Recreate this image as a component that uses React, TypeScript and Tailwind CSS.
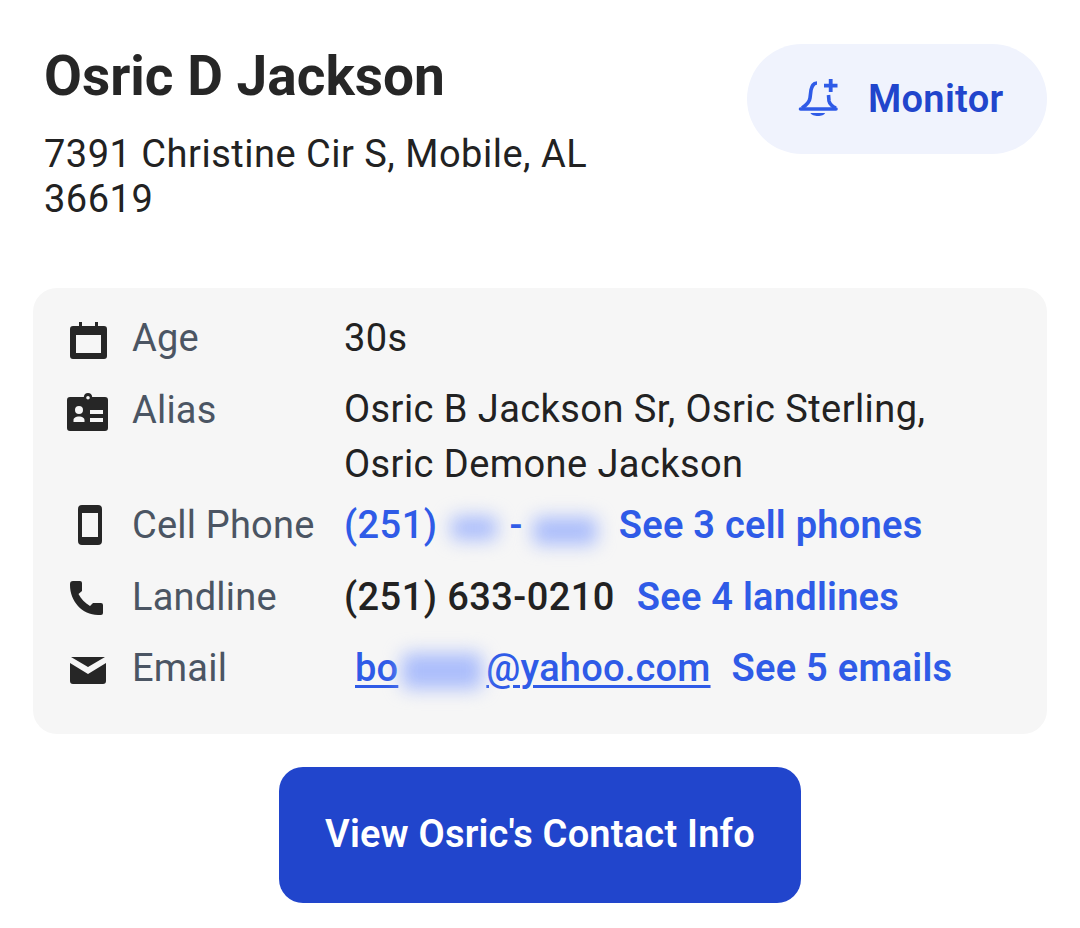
import React from "react";

const Blur = ({ className }: { className: string }) => (
  <span className={`inline-block bg-[#abbdfb] blur-[9px] rounded-md align-middle ${className}`} />
);

const See = ({ children, className }: { children: React.ReactNode; className: string }) => (
  <span className={`font-semibold tracking-[0.25px] text-[#2f5be7] ${className}`}>{children}</span>
);

const Row = ({ icon, label, children, className, labelClass = "" }: { icon: React.ReactNode; label: string; children: React.ReactNode; className: string; labelClass?: string }) => (
  <div className={`flex ${className}`}>
    <div className="w-[99px] h-[54px] pl-[34px] flex items-center text-[#262626] shrink-0">{icon}</div>
    <div className={`w-[212px] h-[54px] leading-[54px] text-[#4b5563] tracking-[0.2px] shrink-0 ${labelClass}`}>{label}</div>
    <div className="text-[#222222] leading-[55px] tracking-[0.43px] whitespace-nowrap">{children}</div>
  </div>
);

const Calendar = () => (
  <svg viewBox="0 0 37 37" className="w-[37px] h-[37px] ml-[3px] mt-[5px]" fill="currentColor">
    <path fillRule="evenodd" d="M9 0h3v4h13V0h3v4h6a3 3 0 0 1 3 3v27a3 3 0 0 1-3 3H3a3 3 0 0 1-3-3V7a3 3 0 0 1 3-3h6zM6 13v18h25V13z" />
  </svg>
);
const IdCard = () => (
  <svg viewBox="0 0 41 39" className="w-[41px] h-[39px] mt-[5px]" fill="currentColor">
    <path fillRule="evenodd" d="M21 1a4.500 4.500 0 0 1 4.200 4H38a3 3 0 0 1 3 3v28a3 3 0 0 1-3 3H3a3 3 0 0 1-3-3V8a3 3 0 0 1 3-3h13.800A4.500 4.500 0 0 1 21 1zm0 3a1.800 1.800 0 1 0 0 3.600A1.800 1.800 0 0 0 21 4zM12 14a4 4 0 1 0 0 8 4 4 0 0 0 0-8zM12 24.500c-3 0-5.500 1.500-5.500 3.500v2h11v-2c0-2-2.500-3.500-5.500-3.500zM23 18v4h13v-4zM23 26v4h13v-4z" />
  </svg>
);
const Mobile = () => (
  <svg viewBox="0 0 24 40" className="w-[24px] h-[40px] ml-[11px]" fill="currentColor">
    <path fillRule="evenodd" d="M4 0h16a4 4 0 0 1 4 4v32a4 4 0 0 1-4 4H4a4 4 0 0 1-4-4V4a4 4 0 0 1 4-4zM4 8v24h16V8z" />
  </svg>
);
const Handset = () => (
  <svg viewBox="0 0 33 34" className="w-[33px] h-[34px] ml-[3px] mt-[1px]" fill="currentColor">
    <path d="M3 0h7a2 2 0 0 1 2 2v8l-3.500 3c2.500 5 6.500 9 11.500 12l3-3h8a2 2 0 0 1 2 2v8a2 2 0 0 1-2 2h-3C12 34 0 20 0 4V3a3 3 0 0 1 3-3z" />
  </svg>
);
const Mail = () => (
  <svg viewBox="0 0 36 27" className="w-[36px] h-[27px] ml-[3px] mt-[5px]" fill="currentColor">
    <path d="M1 0h34L18 10zM0 6l18 11L36 6v18a3 3 0 0 1-3 3H3a3 3 0 0 1-3-3z" />
  </svg>
);
const Bell = () => (
  <svg viewBox="0 0 60 55" className="w-[60px] h-[55px] mb-[3px] text-[#2f5be7]" fill="none" stroke="currentColor" strokeWidth="3.600">
    <path d="M27 13c-4 0-5 3-6 7l-1 8c-.5 5-5 8-8 10" />
    <path d="M10.500 39H46" strokeLinecap="round" />
    <path d="M38.500 25l.5 6c.5 3 4 6 7 7" />
    <path d="M40.700 9v13M34 15.700h13.500" strokeWidth="3.800" />
    <path d="M20.500 43H35c-1 4-13 4-14.500 0z" fill="currentColor" stroke="none" />
  </svg>
);

export default function App() {
  return (
    <div className="w-[1080px] h-[928px] bg-white overflow-hidden pt-[44px] font-['Roboto',sans-serif]">
      <div className="flex justify-between pl-[44px] pr-[33px] h-[244px]">
        <div>
          <h1 className="text-[55px] leading-[64px] font-bold text-[#262626]">Osric D Jackson</h1>
          <p className="mt-[24px] w-[560px] text-[38px] leading-[45px] tracking-[0.5px] text-[#222222]">7391 Christine Cir S, Mobile, AL 36619</p>
        </div>
        <div className="w-[300px] h-[110px] rounded-[55px] bg-[#f0f3fd] flex items-center pl-[43px] gap-[18px] text-[#2145cc]">
          <Bell />
          <span className="text-[38px] font-semibold tracking-[0.3px]">Monitor</span>
        </div>
      </div>

      <div className="mx-[33px] w-[1014px] h-[446px] rounded-[24px] bg-[#f6f6f6] pt-[23px] text-[38px]">
        <Row className="h-[71px]" label="Age" icon={<Calendar />}>30s</Row>
        <Row className="h-[116px]" labelClass="pt-[1px]" label="Alias" icon={<IdCard />}>
          Osric B Jackson Sr, Osric Sterling,<br />Osric Demone Jackson
        </Row>
        <Row className="h-[72px]" label="Cell Phone" icon={<Mobile />}>
          <span className="text-[#2f5be7] font-medium">(251)</span>
          <Blur className="w-[46px] h-[24px] ml-[14px]" />
          <span className="text-[#2f5be7] font-medium ml-[12px] mr-[10px]">-</span>
          <Blur className="w-[64px] h-[28px] mt-[6px]" />
          <See className="ml-[22px]">See 3 cell phones</See>
        </Row>
        <Row className="h-[71px]" label="Landline" icon={<Handset />}>
          <span className="font-medium">(251) 633-0210</span>
          <See className="ml-[22px]">See 4 landlines</See>
        </Row>
        <Row className="h-[60px]" label="Email" icon={<Mail />}>
          <span className="ml-[11px] text-[#2f5be7] font-medium tracking-[0.2px] underline decoration-[3px] underline-offset-[4px]">bo<Blur className="w-[80px] h-[36px] mx-[4px]" />@yahoo.com</span>
          <See className="ml-[21px]">See 5 emails</See>
        </Row>
      </div>

      <div className="mt-[33px] flex justify-center">
        <div className="w-[522px] h-[136px] pb-[2px] rounded-[24px] bg-[#2145cc] text-white text-[38px] tracking-[0.2px] font-semibold flex items-center justify-center">View Osric's Contact Info</div>
      </div>
    </div>
  );
}
